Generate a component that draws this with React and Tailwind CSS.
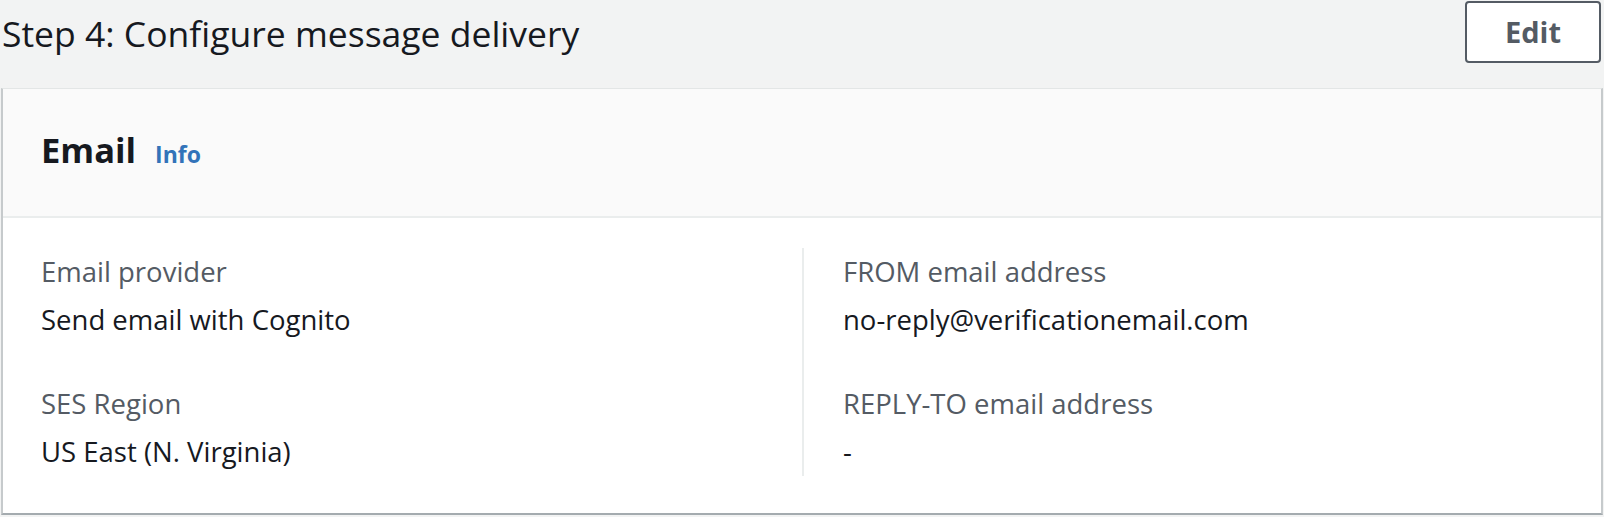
import React from 'react';

const font = { fontFamily: '"Open Sans", "Noto Sans", Arial, sans-serif' };

const Field = ({ label, value, className = '' }) => (
  <div className={className}>
    <div className="text-[27.5px] leading-[48px] text-[#545b64]">{label}</div>
    <div className="text-[27.5px] leading-[48px] text-[#16191f]">{value}</div>
  </div>
);

export default function App() {
  return (
    <div
      className="w-[1604px] h-[517px] bg-[#f2f3f3] overflow-hidden font-['Open_Sans',Arial,sans-serif]"
      style={font}
    >
      {/* Step header */}
      <div className="flex items-start justify-between h-[88px] pt-px pl-[2px] pr-[3px]">
        <h2 className="mt-[12px] text-[35.5px] leading-[40px] font-normal text-[#16191f]">
          Step 4: Configure message delivery
        </h2>
        <button className="w-[136px] h-[62px] flex items-center justify-center bg-white border-2 border-[#545b64] rounded-[4px] text-[29px] font-bold text-[#545b64]">
          Edit
        </button>
      </div>

      {/* Card */}
      <div className="mx-px bg-white border-t border-t-[#e3e6e6] border-x-2 border-x-[#c6cacc] border-b-2 border-b-[#a4abaf]">
        <div className="flex items-baseline bg-[#fafafa] border-b-2 border-[#eaeded] pl-[38px] pt-[37px] pb-[42px]">
          <span className="text-[34.5px] leading-[48px] font-bold text-[#16191f]">Email</span>
          <span className="ml-[19px] text-[23px] font-bold text-[#3273b9]">Info</span>
        </div>

        <div className="grid grid-cols-2 px-[38px] pt-[30px] pb-[37px]">
          <div>
            <Field label="Email provider" value="Send email with Cognito" />
            <Field className="mt-[36px]" label="SES Region" value="US East (N. Virginia)" />
          </div>
          <div className="border-l-2 border-[#eaeded] pl-[39px]">
            <Field label="FROM email address" value="no-reply@verificationemail.com" />
            <Field className="mt-[36px]" label="REPLY-TO email address" value="-" />
          </div>
        </div>
      </div>
    </div>
  );
}
